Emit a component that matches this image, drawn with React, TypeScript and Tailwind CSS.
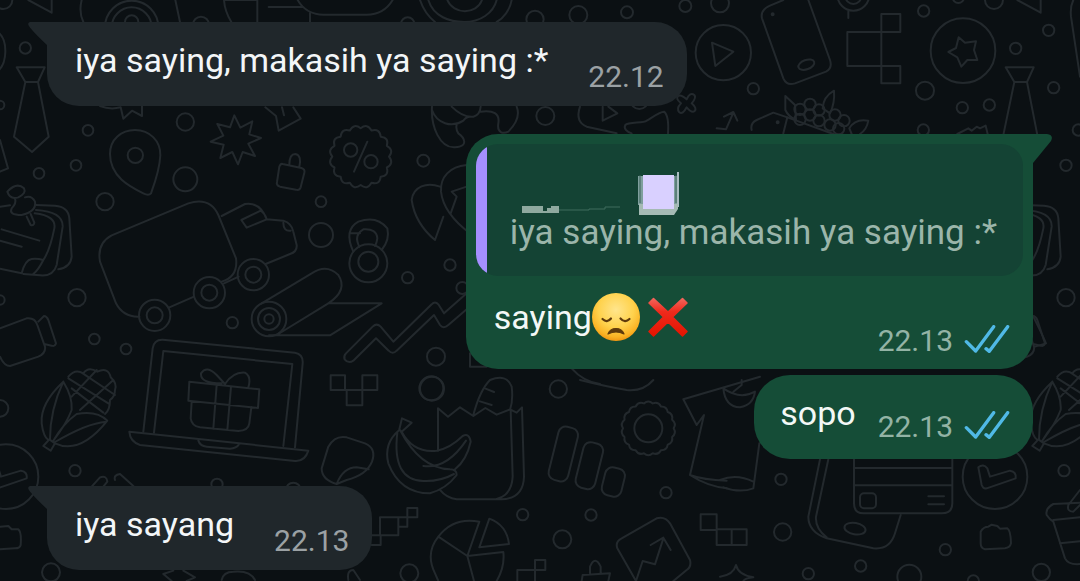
import type { ReactNode } from 'react';

const MESSAGE_TEXT = 'iya saying, makasih ya saying :*';

type Dot = [number, number, number];

// Round badge outline with n soft teeth
function scallop(cx: number, cy: number, r: number, depth: number, n: number) {
  const at = (i: number, radius: number) => {
    const a = (i / n) * Math.PI * 2;
    return `${(cx + Math.cos(a) * radius).toFixed(1)} ${(cy + Math.sin(a) * radius).toFixed(1)}`;
  };
  let d = `M${at(0, r - depth)}`;
  for (let i = 0; i < n; i++) d += `Q${at(i + 0.5, r + depth * 1.6)} ${at(i + 1, r - depth)}`;
  return d + 'Z';
}

function Dots({ items }: { items: Dot[] }) {
  return (
    <>
      {items.map(([cx, cy, r]) => (
        <circle key={`${cx}-${cy}-${r}`} cx={cx} cy={cy} r={r} />
      ))}
    </>
  );
}

// Each patch is drawn on a grid three times finer than the page
function Patch({ x, y, children }: { x: number; y: number; children: ReactNode }) {
  return <g transform={`translate(${x} ${y}) scale(0.33333)`}>{children}</g>;
}

// Doodles on the left edge, which come back where the wallpaper tile repeats
function EdgeDoodles() {
  return (
    <>
      <Patch x={0} y={0}>
        <path d="M50 202H134L114 246H76ZM76 246L42 410L96 456L146 410L114 246M85 0L155 38V-10" />
      </Patch>
      <Patch x={0} y={190}>
        <path d="M0 50L30 46M108 45L165 47Q205 50 208 85L215 200Q212 232 175 238M108 60Q190 65 188 110L170 225Q160 260 120 256L70 252M104 70Q170 78 163 115Q150 180 130 210M0 236L65 250Q75 210 95 207Q112 205 130 210Q115 240 100 252M5 118L118 152M0 152L65 170" />
        <path d="M22 5Q30 30 55 22Q80 10 72 -5Q50 -25 22 5ZM45 25Q50 40 35 55Q25 75 65 75Q110 65 105 35Q95 15 75 22M80 80L92 105Q102 108 103 98L92 72" />
        <Dots items={[[231, 323, 26]]} />
        <path d="M0 415L80 385Q105 382 112 405L135 470Q138 490 115 500L30 528Q12 528 0 500M115 395L132 378Q140 378 145 390L168 460Q165 470 155 467L133 462" />
      </Patch>
      <Patch x={0} y={380}>
        <path d="M190 5Q120 70 125 130Q130 170 145 180M190 5Q218 50 215 90Q200 130 160 182M190 5Q150 90 150 178M148 178L130 198L152 212L165 190ZM165 190Q240 225 322 122Q290 90 230 102Q190 130 160 182M318 125Q260 130 165 186" />
        <path d="M205 -10Q225 -35 250 -20Q265 -42 292 -25Q325 -40 332 -8Q352 10 345 30Q345 50 330 60Q330 90 315 102M205 -5L325 70M215 50L290 -30M240 90L340 0M215 25L310 98M245 -22L345 45" />
        <Dots items={[[18, 290, 97], [225, 272, 17]]} />
        <path d="M-32 262Q-17 250 -5 265L3 290L63 272Q83 275 80 295L-7 325Q-17 328 -22 315Z" />
      </Patch>
    </>
  );
}

function Wallpaper() {
  return (
    <svg
      aria-hidden="true"
      className="absolute top-0 left-0"
      width="1080"
      height="581"
      viewBox="0 0 1080 581"
      fill="none"
      stroke="#23292d"
      strokeWidth="6"
      strokeLinecap="round"
      strokeLinejoin="round"
    >
      <EdgeDoodles />
      <g transform="translate(989 0)">
        <EdgeDoodles />
      </g>

      {/* top left: pin, burst, padlock, percent badge */}
      <Patch x={0} y={0}>
        <Dots
          items={[
            [76, 144, 17], [0, 315, 13], [264, 391, 16], [228, 496, 16], [117, 520, 16], [556, 366, 26],
            [556, 538, 36], [406, 466, 23], [10, 0, 27], [395, 82, 80], [395, 82, 60], [395, 66, 20],
            [603, 74, 24], [1052, 450, 20], [1113, 485, 20],
          ]}
        />
        <path d="M-8 95C26 120 22 190 -8 215M0 420L24 505L0 515" />
        <path d="M330 462C330 418 364 390 405 390C450 390 482 424 481 466C479 510 464 550 453 580Q446 588 430 580C390 560 330 530 330 462Z" />
        <path d="M703 346L721 383L757 364L748 403L783 414L745 431L765 468L728 456L714 493L697 456L661 474L671 434L632 425L670 407L652 372L690 382Z" />
        <path d="M300 318Q330 330 362 322L370 356L396 332L426 348V318M796 322L828 348L836 392L902 356L880 322M846 322L852 346" />
        <path d="M848 492L904 504Q916 508 913 518L902 562Q898 572 888 569L840 560Q828 556 831 546L838 500Q842 490 848 492ZM868 494C868 470 876 462 886 462C900 464 903 480 898 500" />
        <path d={scallop(1082, 470, 92, 7, 16)} />
        <path d="M1102 425L1062 515" />
        <path d="M245 0C240 20 240 45 250 66M526 0L540 66M672 0C674 30 684 50 694 66M672 0H772V66M806 21H910M893 0C910 30 940 44 970 44H1100C1130 44 1160 30 1178 0M930 66V40" />
      </Patch>

      {/* top middle */}
      <Patch x={360} y={0}>
        <Dots
          items={[
            [143, 72, 20], [525, 58, 26], [655, 45, 27], [801, 37, 18], [976, 18, 18], [1080, 10, 27],
            [556, 348, 27], [190, 482, 18], [838, 300, 27], [1090, 158, 83],
          ]}
        />
        <path d="M180 0C190 30 205 50 225 66M455 0C450 30 430 55 410 66M205 0C220 50 270 66 313 66M410 0C400 40 360 66 313 66M262 0C280 45 350 45 366 0" />
        <path d="M216 320C212 380 240 445 285 442C330 440 310 410 295 400C285 385 290 380 290 372M216 330C230 370 275 385 310 362Q318 350 330 350M275 320C300 345 320 352 340 350Q360 345 362 320M362 335C400 330 420 340 415 370C410 400 430 402 445 395C470 370 480 345 470 320" />
        <path d="M660 320C650 350 655 370 680 380L770 400M728 320V362L772 340L745 320M815 400C800 395 790 385 796 375C805 365 850 370 860 362C880 350 900 335 912 335C925 345 926 370 924 400" />
        <path d="M955 288Q962 282 980 298Q990 275 1003 285Q1010 293 995 310Q1012 325 1004 333Q995 340 980 322Q968 345 958 337Q948 325 963 310Q945 295 955 288Z" />
        <path d="M1056 128L1120 155L1066 198Z" />
        <path d="M320 495C270 500 240 530 243 575Q250 640 330 700M155 600C160 560 200 545 240 560M155 600Q165 670 225 720L250 650M320 560Q290 570 275 575L290 590L272 640" />
      </Patch>

      {/* top right: phone, blocks, star button, berries */}
      <Patch x={720} y={0}>
        <Dots
          items={[
            [729, 152, 97], [611, 33, 17], [615, 272, 27], [727, 323, 17], [808, 315, 17], [887, 145, 17],
            [986, 91, 17], [1001, 263, 17], [100, 266, 17], [1038, 496, 17], [610, 390, 17], [822, 0, 27],
            [715, -8, 17], [1075, 390, 17], [158, 43, 3], [173, 367, 3], [400, -16, 48], [400, -12, 24],
          ]}
        />
        <path d="M190 0L150 17Q120 30 126 55L190 235Q200 258 225 250L318 215Q338 205 330 180L265 0M385 34V54" />
        <ellipse cx="259" cy="194" rx="25" ry="14" transform="rotate(-20 259 194)" />
        <path d="M382 96H484V198H382ZM484 42H541V96H484ZM484 198H541V250H484Z" />
        <path d="M716 112L735 128L768 124L762 150L772 180L742 180L724 200L712 172L685 156L708 144Z" />
        <path d="M1060 0Q1050 20 1053 50L1080 230" />
        <path d="M196 288L196 330Q205 350 228 360L225 315ZM342 272Q310 290 308 325L330 340Q345 310 342 272ZM395 402L388 385Q405 355 445 362Q440 390 420 402" />
        <Dots
          items={[
            [240, 328, 17], [270, 313, 17], [297, 330, 17], [240, 358, 17], [270, 345, 17], [297, 362, 17],
            [345, 345, 17], [372, 362, 17], [330, 375, 17], [356, 386, 17],
          ]}
        />
        <path d="M95 390Q90 370 110 360L160 338L202 352L340 402M202 352L190 400M-10 385L18 388L40 338M12 350L40 336L52 362M712 402L745 385L755 392L770 380L780 385L797 377L803 402" />
      </Patch>

      {/* van, scroll, laptop with a gift */}
      <Patch x={0} y={190}>
        <Dots
          items={[
            [315, 35, 26], [0, 330, 14], [283, 447, 16], [378, 477, 16], [697, 398, 17], [963, 35, 16],
            [963, 135, 36], [464, 376, 47], [464, 376, 24], [628, 308, 47], [628, 308, 24], [760, 254, 47],
            [760, 254, 24], [807, 387, 52], [807, 387, 33], [807, 387, 14],
          ]}
        />
        <path d="M418 380Q370 382 348 340L300 215Q290 160 335 136L565 40Q630 20 655 75L708 205Q715 260 665 275M665 78L735 42Q780 35 800 88L850 92Q875 100 880 125L890 165Q892 185 870 192L797 222M508 352L582 320M672 280L716 260M724 90L782 62Q795 70 800 88L740 113ZM850 98Q850 125 872 122" />
        <path d="M785 340L935 250Q980 220 1015 255Q1045 300 985 340L835 432M807 436H990L1145 340H985" />
        <path d="M430 725L458 475Q462 448 488 449L885 488Q910 492 908 520L885 772M462 728L490 483L877 522L850 768" />
        <path d="M388 725L925 782Q915 815 885 813L420 765Q390 755 388 725ZM595 752Q600 768 620 770L690 776Q710 774 716 764" />
        <path d="M568 575L778 598L774 654L565 632ZM575 634L572 685Q575 708 600 712L715 723Q745 722 748 700L754 652M650 585L640 716M693 590L682 720M665 580Q600 580 603 550Q620 525 650 555L675 582Q700 545 735 548Q755 560 745 592" />
      </Patch>

      {/* ring, chart line, blocks */}
      <Patch x={300} y={260}>
        <Dots
          items={[
            [408, 290, 27], [396, 386, 36], [775, 387, 26], [323, 53, 17], [450, 15, 17], [487, 84, 18],
            [205, 10, 57], [205, 5, 30],
          ]}
        />
        <path d="M160 -25Q130 -90 175 -115Q230 -135 262 -95Q270 -60 245 -30M178 -40Q160 -75 190 -92Q230 -95 232 -65Q230 -50 225 -42M152 -80H180" />
        <path d="M500 148L445 195Q430 208 420 195L402 165L290 272Q278 285 266 272L228 235L160 302Q145 312 134 298Q130 288 138 280L218 200Q230 188 242 200L280 245L395 133Q405 122 415 133L432 160L500 100" />
        <path d="M92 346H135V390H92ZM187 346H232V390H187ZM140 390H187V436H140ZM135 390H187M510 280V320H560M815 325Q850 365 900 372" />
      </Patch>

      {/* bottom left */}
      <Patch x={0} y={380}>
        <Dots items={[[0, 85, 25], [651, 313, 17], [880, 330, 22], [153, 577, 27]]} />
        <path d="M275 320L300 292Q320 285 322 305L310 320M345 300Q340 285 360 282L400 318M0 440L25 438L35 448H55Q65 455 62 495Q60 505 45 505L0 508" />
        <path d="M490 582L520 572M550 572L585 592L560 603M490 582L515 603M665 600Q670 575 700 575Q750 570 765 600M1045 600Q1040 570 1060 570L1080 600" />
        <path d="M965 265L985 200Q1005 165 1040 172L1095 190Q1130 205 1116 245Q1100 285 1040 300L1010 312Q965 300 965 265ZM1010 312Q1030 262 1070 262L1106 268" />
      </Patch>

      {/* groceries, bars, gear, pie */}
      <Patch x={360} y={380}>
        <Dots
          items={[
            [214, 25, 36], [918, 338, 17], [488, 404, 17], [693, 405, 17], [607, 478, 27], [148, 580, 27],
            [865, 145, 42],
          ]}
        />
        <path d="M234 212V85L264 110L300 82L340 108L376 84L410 104L450 88L470 98L486 82L492 290Q490 355 425 358H290Q260 355 240 330M452 90L458 290Q455 345 410 357M340 105Q360 30 390 0Q440 -20 455 20Q460 60 450 90M375 25L402 36M360 64L395 75" />
        <path d="M126 115L155 128L125 155L118 148ZM118 150Q70 190 85 250Q120 340 210 340Q260 325 290 285Q290 268 270 268Q180 265 120 150M112 158Q95 300 190 303Q240 305 282 282M125 155Q160 220 230 212Q270 205 308 168Q328 158 332 185Q320 240 285 268M190 258Q260 268 318 182" />
        <rect x="580" y="140" width="60" height="164" rx="22" transform="rotate(14 610 222)" />
        <rect x="658" y="187" width="60" height="140" rx="22" transform="rotate(14 688 257)" />
        <rect x="730" y="263" width="60" height="86" rx="22" transform="rotate(14 760 306)" />
        <path d={scallop(865, 145, 80, 4, 18)} />
        <path d="M235 603L225 580Q195 520 235 470Q280 410 358 425L322 528L430 516Q435 560 410 603M322 528L235 470M322 528L342 603M388 416L358 502L447 492Q440 435 388 416Z" />
        <path d="M60 412H115V466H60ZM115 412H142V440H115ZM142 384H172V412H142ZM35 466H62V495H35M472 603V570H525M525 540H556V570H525ZM525 570V603M665 603L668 585L750 580L745 603M690 580V560Q705 525 722 560V580" />
        <path d="M828 603L772 505Q765 485 785 475L890 415Q915 408 930 430L990 540Q995 560 980 570L940 603M828 603L848 543L885 553L910 475M872 495L910 473L932 510" />
        <path d="M660 0Q740 20 800 30Q850 35 880 0M1200 -10L970 58L1010 135L1032 105L990 285Q1040 318 1100 325M990 285Q1030 300 1100 302M1022 403H1070V450H1022ZM1070 448V495H1160V448H1070M1115 448V495" />
      </Patch>

      {/* bottom right: phone with a card, folder, cup */}
      <Patch x={720} y={380}>
        <Dots
          items={[
            [183, 298, 17], [188, 456, 26], [422, 558, 17], [265, 581, 17], [676, 509, 17], [568, 590, 36],
            [964, 577, 26], [760, 603, 17],
          ]}
        />
        <path d="M10 25Q15 80 60 82Q100 75 105 35M10 25Q60 60 105 35M65 0V15L40 35M118 190L100 325Q60 340 10 322M0 300Q50 280 100 305" />
        <path d="M300 238L265 410Q265 455 320 475L460 505Q510 510 525 460L542 405M325 238L288 410Q285 445 320 472" />
        <ellipse cx="405" cy="446" rx="32" ry="17" transform="rotate(10 405 446)" />
        <path d="M402 238V370Q402 400 430 400H665Q697 400 697 370V238M402 264H697M402 316H697M625 349H672M625 373H672" />
        <rect x="420" y="340" width="48" height="45" rx="12" />
        <path d="M782 455Q790 440 805 440L815 434L832 438L840 446L862 445Q872 450 873 490Q870 503 855 505L795 508Q782 505 782 490Z" />
        <path d="M1080 368L1000 372Q975 385 980 405Q990 420 1000 425L1035 535Q1045 555 1080 552M1000 420L1080 412M1020 490L1080 484M1080 330L1045 375Q1040 395 1060 395L1080 375" />
        <path d="M0 590Q40 585 48 555Q55 585 100 592Q75 595 70 603M940 -190Q965 -140 978 -110L945 -100" />
      </Patch>
    </svg>
  );
}

function Ticks() {
  return (
    <svg
      aria-hidden="true"
      className="mb-[6px] ml-[11px] h-7 w-[46px] shrink-0"
      viewBox="312 76 138 84"
      fill="none"
      stroke="#50b9e6"
      strokeWidth="10"
      strokeLinecap="round"
      strokeLinejoin="round"
    >
      <path d="M319 126L347 154L401 81M378 147L388 155L443 81" />
    </svg>
  );
}

function SadFace() {
  return (
    <svg aria-hidden="true" className="size-12 shrink-0" viewBox="0 0 48 48" fill="none">
      <defs>
        <radialGradient id="face" cx="0.5" cy="0.35" r="0.66">
          <stop offset="0" stopColor="#ffe58c" />
          <stop offset="0.55" stopColor="#ffd24d" />
          <stop offset="0.85" stopColor="#fbb324" />
          <stop offset="1" stopColor="#ef9310" />
        </radialGradient>
      </defs>
      <circle cx="24" cy="24" r="24" fill="url(#face)" />
      <path d="M10.5 26Q15 30.5 19 25.5M28.5 25.5Q33 30.5 37.5 26" stroke="#5f3a0c" strokeWidth="2.2" strokeLinecap="round" />
      <path d="M16 41Q18 35.5 24 35.5T32 41Q24 37 16 41Z" fill="#5f3a0c" stroke="#5f3a0c" strokeWidth="1.2" strokeLinejoin="round" />
    </svg>
  );
}

function RedCross() {
  return (
    <svg aria-hidden="true" className="ml-2 size-10 shrink-0" viewBox="0 0 40 40">
      <defs>
        <linearGradient id="cross" x1="0" y1="0" x2="0" y2="1">
          <stop offset="0" stopColor="#f2665c" />
          <stop offset="0.35" stopColor="#ee2a1c" />
          <stop offset="1" stopColor="#e51400" />
        </linearGradient>
      </defs>
      <path
        d="M5.5 1.5L20 15L34.5 1.5L39 6L24.5 20L39 34.5L34.5 39L20 25L5.5 39L1 34.5L15.5 20L1 6Z"
        fill="url(#cross)"
        stroke="url(#cross)"
        strokeWidth="1.5"
        strokeLinejoin="round"
      />
    </svg>
  );
}

// Sender name of the quoted message, rubbed out down to a few leftover marks
function ErasedName() {
  return (
    <svg aria-hidden="true" className="h-[41px] w-[180px] overflow-visible" viewBox="4 1 180 41">
      <path d="M16 35H53V42H16Z" fill="#8fa99f" />
      <path d="M37 35H45V37H41V40H37Z" fill="#144334" />
      <path d="M53 39H83V38H99V36H114" fill="none" stroke="#3f6d5c" />
      <path d="M132 5H171V34H132Z" fill="#7f9f9d" />
      <path d="M134 4V32M170 4V32" stroke="#3c6358" />
      <path d="M172 1V36" stroke="#a9bcc0" strokeWidth="2" />
      <path d="M133 33H172V38L168 44H133Z" fill="#a5bab4" />
      <path d="M137 4H168V38H137Z" fill="#d9d0ff" />
    </svg>
  );
}

function Tail({ sent }: { sent?: boolean }) {
  return sent ? (
    <svg aria-hidden="true" className="absolute top-0 -right-[19px] h-[30px] w-5" viewBox="0 0 20 30" fill="#154d37">
      <path d="M0 0H15Q22 1 19 7L1 29H0Z" />
    </svg>
  ) : (
    <svg aria-hidden="true" className="absolute top-0 -left-[19px] h-[30px] w-5" viewBox="0 0 20 30" fill="#20272b">
      <path d="M20 0H2Q-1 1 1 4Q4 9 19 23H20Z" />
    </svg>
  );
}

function Received({ text, time }: { text: string; time: string }) {
  return (
    <article className="relative ml-[47px] flex items-end self-start rounded-[32px] rounded-tl-none bg-[#20272b] pt-[18px] pr-[23px] pb-[11px] pl-7">
      <Tail />
      <p className="mb-[15px] text-[34px] leading-10 text-[#f3f6f8]">{text}</p>
      <time className="ml-10 text-[30px] leading-9 text-[#9ba1a4]">{time}</time>
    </article>
  );
}

export default function App() {
  return (
    <main className="relative min-h-screen overflow-hidden bg-[#0b1013] font-['Roboto',sans-serif] whitespace-nowrap">
      <Wallpaper />
      <div className="relative flex flex-col pt-[22px] pb-[11px]">
        <Received text={MESSAGE_TEXT} time="22.12" />

        <article className="relative mt-7 mr-[47px] self-end rounded-[32px] rounded-tr-none bg-[#154d37] p-[10px]">
          <Tail sent />
          <blockquote className="overflow-hidden rounded-[22px] bg-[#144334]">
            <div className="border-l-[11px] border-[#a58fff] pt-7 pr-[26px] pb-[23px] pl-[23px]">
              <ErasedName />
              <p className="text-[35px] leading-10 text-[#9bb5aa]">{MESSAGE_TEXT}</p>
            </div>
          </blockquote>
          <div className="mt-[17px] flex items-end justify-between pr-[13px] pl-[18px]">
            <p className="mb-[18px] flex items-center text-[34px] leading-10 text-[#f3f8f6]">
              saying
              <SadFace />
              <RedCross />
            </p>
            <div className="flex items-end">
              <time className="text-[30px] leading-9 text-[#93b3a5]">22.13</time>
              <Ticks />
            </div>
          </div>
        </article>

        <article className="mt-[6px] mr-[47px] flex items-end self-end rounded-[36px] bg-[#154d37] pt-[18px] pr-[23px] pb-[14px] pl-[26px]">
          <p className="mb-3 text-[34px] leading-10 text-[#f3f8f6]">sopo</p>
          <time className="ml-[22px] text-[30px] leading-9 text-[#93b3a5]">22.13</time>
          <Ticks />
        </article>

        <div className="mt-[27px] flex">
          <Received text="iya sayang" time="22.13" />
        </div>
      </div>
    </main>
  );
}
